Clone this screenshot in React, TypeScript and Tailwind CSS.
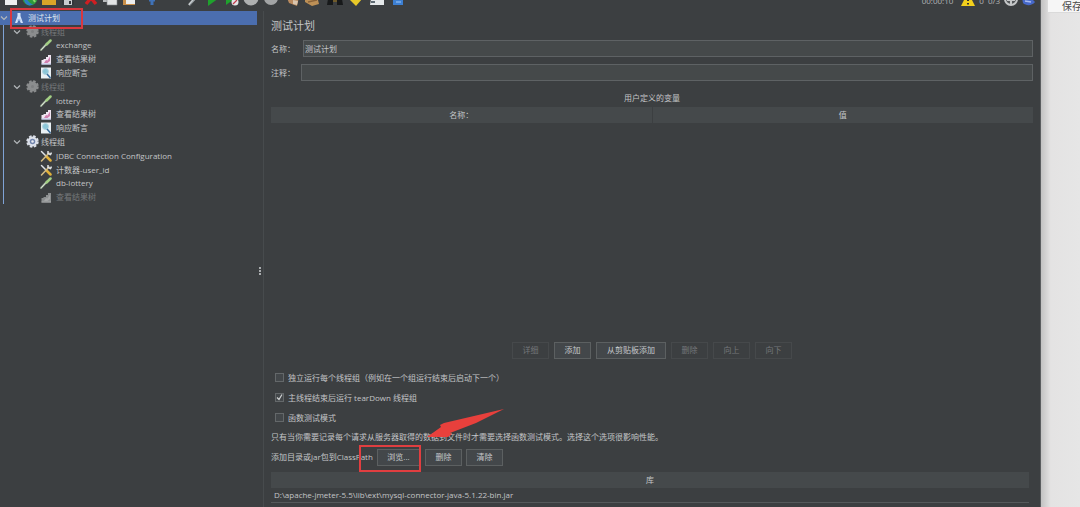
import React from "react";

type IconName =
  | "gear"
  | "gearOff"
  | "dropper"
  | "chart"
  | "chartOff"
  | "assert"
  | "tools"
  | "flask";

function TreeIcon({ name }: { name: IconName }) {
  if (name === "flask")
    return (
      <svg className="h-3 w-3 shrink-0" viewBox="0 0 12 12" aria-hidden="true">
        <path d="M4.500 1h3v3l2.500 7H7.800L6 7 4.200 11H2l2.500-7z" fill="#d3e2f8" />
        <path d="M4.300 8h3.400" stroke="#8fb2e6" strokeWidth="1" />
      </svg>
    );
  if (name === "gear" || name === "gearOff") {
    const on = name === "gear";
    return (
      <svg className="h-[13px] w-[13px] shrink-0" viewBox="0 0 26 26" aria-hidden="true">
        <circle cx="13" cy="13" r="10.800" fill="none" stroke={on ? "#dde1ea" : "#8b8d8e"} strokeWidth="3.400" strokeDasharray="5.200 3.280" />
        <circle cx="13" cy="13" r="10" fill={on ? "#dde1ea" : "#8b8d8e"} />
        {on && <circle cx="13" cy="13" r="5.500" fill="#7185ad" />}
        <circle cx="13" cy="13" r={on ? 2.5 : 3} fill={on ? "#eceef4" : "#7d7f80"} />
      </svg>
    );
  }
  if (name === "dropper")
    return (
      <svg className="h-3 w-3 shrink-0" viewBox="0 0 24 24" aria-hidden="true">
        <path d="M2 22 14 9" stroke="#8fa08b" strokeWidth="4" strokeLinecap="round" />
        <path d="M3 21 13 10" stroke="#e5eee0" strokeWidth="2" strokeLinecap="round" />
        <path d="M13 11 21 3" stroke="#a3cf84" strokeWidth="5" strokeLinecap="round" />
      </svg>
    );
  if (name === "chart" || name === "chartOff") {
    const on = name === "chart";
    return (
      <svg className="h-3 w-3 shrink-0" viewBox="0 0 24 24" aria-hidden="true">
        <path d="M3 14h4v-2h5V8h4V4h6v19H3z" fill={on ? "#f0e6f2" : "#8c8f90"} />
        <path d="m8 20 4-6 3 1 5-8v9l-5 4z" fill={on ? "#cf7fae" : "#a4a6a7"} />
        <path d="M3 22h19" stroke={on ? "#b9c4ea" : "#a4a6a7"} strokeWidth="2" />
      </svg>
    );
  }
  if (name === "assert")
    return (
      <svg className="h-3 w-3 shrink-0" viewBox="0 0 24 24" aria-hidden="true">
        <path d="M2 1h20v22H2z" fill="#e9f0f4" />
        <circle cx="11" cy="9" r="6" fill="#8cc6d8" stroke="#b3d4e0" strokeWidth="2" />
        <path d="m14 14 7 8" stroke="#34699a" strokeWidth="3" />
      </svg>
    );
  return (
    <svg className="h-3 w-3 shrink-0" viewBox="0 0 24 24" aria-hidden="true">
      <path d="m3 3 11 11" stroke="#dfe3e6" strokeWidth="3" strokeLinecap="round" />
      <path d="m13 13 8 8" stroke="#e0b03a" strokeWidth="5" strokeLinecap="round" />
      <path d="M3 22 18 6" stroke="#d5bd82" strokeWidth="3" strokeLinecap="round" />
      <path d="M16 2v5l5 2 2-4" fill="none" stroke="#dfe3e6" strokeWidth="3" />
    </svg>
  );
}

type Node = { text: string; icon: IconName; level: 1 | 2; off?: boolean };

const nodes: Node[] = [
  { text: "线程组", icon: "gearOff", level: 1, off: true },
  { text: "exchange", icon: "dropper", level: 2 },
  { text: "查看结果树", icon: "chart", level: 2 },
  { text: "响应断言", icon: "assert", level: 2 },
  { text: "线程组", icon: "gearOff", level: 1, off: true },
  { text: "lottery", icon: "dropper", level: 2 },
  { text: "查看结果树", icon: "chart", level: 2 },
  { text: "响应断言", icon: "assert", level: 2 },
  { text: "线程组", icon: "gear", level: 1 },
  { text: "JDBC Connection Configuration", icon: "tools", level: 2 },
  { text: "计数器-user_id", icon: "tools", level: 2 },
  { text: "db-lottery", icon: "dropper", level: 2 },
  { text: "查看结果树", icon: "chartOff", level: 2, off: true },
];

function Chevron() {
  return (
    <svg className="h-2 w-2 shrink-0" viewBox="0 0 8 8" aria-hidden="true">
      <path d="m1 2.500 3 3 3-3" fill="none" stroke="#b4b8bb" strokeWidth="1.200" />
    </svg>
  );
}

function Tree() {
  return (
    <nav className="w-[257px] shrink-0" aria-label="测试计划">
      <ul className="relative grid h-[193px] auto-rows-fr">
        <li className="relative flex items-center bg-[#4b6eaf] text-[#dfe5ee]">
          <Chevron />
          <span className="ml-[5px] flex items-center gap-[3px]">
            <TreeIcon name="flask" />
            测试计划
          </span>
          <span className="pointer-events-none absolute -top-[3px] left-[10px] z-10 h-[21px] w-[73px] border-2 border-[#d9383f]" />
        </li>
        {nodes.map((n, i) => (
          <li
            key={i}
            className={`flex items-center ${n.level === 1 ? "pl-[13px]" : "pl-[40px]"} ${n.off ? "text-[#75787a]" : "text-[#c3c5c7]"}`}
          >
            {n.level === 1 && (
              <span className="mr-[5px] flex">
                <Chevron />
              </span>
            )}
            <span className={`flex items-center ${n.level === 1 ? "gap-[2px]" : "gap-1"}`}>
              <TreeIcon name={n.icon} />
              {n.text}
            </span>
          </li>
        ))}
        <span className="pointer-events-none absolute top-[14px] bottom-0 left-[3px] w-px bg-[#7fa3d6]" />
      </ul>
    </nav>
  );
}

/* Toolbar drawings share a 16x16 box. */
const tools: { label: string; art: React.ReactNode }[][] = [
  [
    { label: "新建", art: <path d="M2 0h12v15H2z" fill="#eeefef" /> },
    {
      label: "模板",
      art: (
        <>
          <circle cx="8" cy="8" r="7.500" fill="#2f9a3c" />
          <path d="M2 10c4-3 4 4 9 4-3 3-8 1-9-4z" fill="#2b7fc4" />
          <path d="M9 8c2 0 3 2 4 4" stroke="#8fd66a" strokeWidth="2" fill="none" />
        </>
      ),
    },
    { label: "打开", art: <path d="M1 4h14v11H1z" fill="#dba428" /> },
    {
      label: "保存",
      art: (
        <>
          <path d="M2 1h12v14H2z" fill="#33373b" />
          <path d="M4 10h8v5H4z" fill="#c9cccf" />
          <path d="M9 11h2v3H9z" fill="#33373b" />
        </>
      ),
    },
  ],
  [
    { label: "剪切", art: <path d="M3 2 13 14M13 2 3 14" stroke="#cf1f22" strokeWidth="3.400" /> },
    {
      label: "复制",
      art: (
        <>
          <path d="M1 1h9v11H1z" fill="#b9bcbe" />
          <path d="M5 4h10v11H5z" fill="#e2e4e5" stroke="#84888a" strokeWidth=".6" />
        </>
      ),
    },
    {
      label: "粘贴",
      art: (
        <>
          <path d="M2 1h12v14H2z" fill="#c98f49" />
          <path d="M5 5h7l2 2v7H5z" fill="#eceded" />
        </>
      ),
    },
  ],
  [
    { label: "展开", art: <path d="M8 5v10M5 10h6" stroke="#3f72b8" strokeWidth="3" /> },
    { label: "折叠", art: <path d="M4 8h8" stroke="#3f72b8" strokeWidth="2" /> },
    {
      label: "切换",
      art: (
        <>
          <path d="M7 15 16 5" stroke="#c7cccf" strokeWidth="2.500" />
          <path d="M8 15 16 6" stroke="#777d80" strokeWidth="1" />
        </>
      ),
    },
  ],
  [
    { label: "启动", art: <path d="M3 0v16l11-8z" fill="#1fa12d" /> },
    {
      label: "不停顿开始",
      art: (
        <>
          <path d="M2 0v15l11-8z" fill="#1fa12d" />
          <circle cx="11" cy="12" r="3.500" fill="#e3e5e6" />
          <path d="m9 14 4-4" stroke="#c13a4a" strokeWidth="1.200" />
        </>
      ),
    },
    { label: "停止", art: <circle cx="8" cy="8" r="7.500" fill="#aeb0b1" /> },
    { label: "关闭", art: <circle cx="9" cy="8" r="7" fill="#a2a4a5" /> },
  ],
  [
    {
      label: "清除",
      art: (
        <>
          <path d="m2 8 6-4 6 3-2 9-8-3z" fill="#b98a5e" />
          <path d="m8 10 5 1-1 4-4-1z" fill="#d9c5ae" />
        </>
      ),
    },
    {
      label: "清除全部",
      art: (
        <>
          <path d="M1 6h12l2 8-7 2-7-4z" fill="#bd9056" />
          <path d="m4 12 9-2" stroke="#8a6238" strokeWidth="1.400" />
        </>
      ),
    },
  ],
  [
    {
      label: "查找",
      art: (
        <>
          <path d="M1 9h5v6H0zM10 9h5l1 6h-6z" fill="#17191a" />
          <path d="M6 10h4v2H6z" fill="#6e5a2b" />
        </>
      ),
    },
    { label: "重置查找", art: <path d="m3 9 8-6 5 6-6 7z" fill="#e8c928" /> },
  ],
  [
    {
      label: "函数助手",
      art: (
        <>
          <path d="M3 3h12v12H1z" fill="#e5e8ea" />
          <path d="M2 12h4" stroke="#5f6b74" strokeWidth="2" />
        </>
      ),
    },
  ],
  [
    {
      label: "帮助",
      art: (
        <>
          <path d="M1 1h10v14H1z" fill="#3c7fd2" />
          <path d="M4 12h5" stroke="#7fb0ec" strokeWidth="1.500" />
        </>
      ),
    },
  ],
];

function Toolbar() {
  return (
    <header className="flex h-[11px] shrink-0 items-end justify-between overflow-hidden pb-[5px]">
      <div className="flex gap-1 pl-px">
        {tools.map((group, i) => (
          <div key={i} className="flex">
            {group.map((t) => (
              <button key={t.label} type="button" aria-label={t.label} className="flex w-[19px] justify-center">
                <svg className="h-4 w-4" viewBox="0 0 16 16" aria-hidden="true">
                  {t.art}
                </svg>
              </button>
            ))}
          </div>
        ))}
      </div>
      <div className="flex items-end pr-1 leading-[10px] text-[#b4b6b8]">
        <span>00:00:10</span>
        <svg className="ml-2 h-[14px] w-[14px]" viewBox="0 0 14 14" aria-hidden="true">
          <path d="M7 0 14 14H0z" fill="#f2cf1c" />
          <path d="M7 4v5M7 11v1.500" stroke="#34322a" strokeWidth="2" />
        </svg>
        <span className="ml-1">0</span>
        <span className="ml-1">0/3</span>
        <svg className="ml-1 h-[14px] w-[14px]" viewBox="0 0 14 14" aria-hidden="true">
          <circle cx="7" cy="7" r="6" fill="#55585a" stroke="#c5c7c8" strokeWidth="2" />
          <path d="M7 7v6M3 8h8" stroke="#c5c7c8" strokeWidth="2" />
        </svg>
        <svg className="ml-1 h-[14px] w-[14px]" viewBox="0 0 14 14" aria-hidden="true">
          <path d="M0 6h9l4 4c-3 4-9 4-12 1z" fill="#4668c8" />
          <path d="m3 9 6 1" stroke="#a9bbf0" strokeWidth="1.500" />
        </svg>
      </div>
    </header>
  );
}

function Btn({ children, wide, disabled }: { children: React.ReactNode; wide?: boolean; disabled?: boolean }) {
  return (
    <button
      type="button"
      disabled={disabled}
      className={`h-[17px] border text-center ${wide ? "px-[10px]" : "min-w-[37px] px-2"} ${
        disabled ? "border-[#46494b] text-[#74777a]" : "border-[#5c6061] bg-[#43474a] text-[#c6c8ca]"
      }`}
    >
      {children}
    </button>
  );
}

function Check({ label, checked }: { label: string; checked?: boolean }) {
  return (
    <label className="flex h-5 items-center gap-1 pl-1">
      <span className="grid h-[9px] w-[9px]">
        <input
          type="checkbox"
          defaultChecked={checked}
          className="peer col-start-1 row-start-1 h-[9px] w-[9px] appearance-none border border-[#64686a] bg-[#43474a]"
        />
        <svg
          className="pointer-events-none invisible col-start-1 row-start-1 h-[9px] w-[9px] peer-checked:visible"
          viewBox="0 0 9 9"
          aria-hidden="true"
        >
          <path d="m2 4.500 2 2 3-5" fill="none" stroke="#d0d2d3" strokeWidth="1.200" />
        </svg>
      </span>
      {label}
    </label>
  );
}

function PlanForm() {
  return (
    <main className="flex min-w-0 flex-1 flex-col border-l border-[#474b4d] pt-[7px] pr-[7px] pb-[4px] pl-[7px]">
      <h1 className="h-4 text-[11px] leading-4">测试计划</h1>
      <div className="mt-[6px] flex items-center gap-2">
        <label htmlFor="plan-name" className="w-6">名称：</label>
        <input
          id="plan-name"
          defaultValue="测试计划"
          className="h-[17px] min-w-0 flex-1 border border-[#5e6264] bg-[#45494a] px-px text-[#c3c5c7] outline-none"
        />
      </div>
      <div className="mt-[7px] flex items-center gap-[6px]">
        <label htmlFor="plan-note" className="w-6">注释：</label>
        <input
          id="plan-note"
          className="h-[17px] min-w-0 flex-1 border border-[#5e6264] bg-[#45494a] px-px outline-none"
        />
      </div>
      <div className="mt-2 flex-1">
        <table className="w-full table-fixed">
          <caption className="h-[18px] leading-[18px]">用户定义的变量</caption>
          <thead>
            <tr className="h-4 bg-[#45494b]">
              <th className="border-r border-[#3c3f41] font-normal">名称：</th>
              <th className="font-normal">值</th>
            </tr>
          </thead>
          <tbody />
        </table>
      </div>
      <div className="flex justify-center gap-[5px]">
        <Btn disabled>详细</Btn>
        <Btn>添加</Btn>
        <Btn wide>从剪贴板添加</Btn>
        <Btn disabled>删除</Btn>
        <Btn disabled>向上</Btn>
        <Btn disabled>向下</Btn>
      </div>
      <div className="mt-[9px]">
        <Check label="独立运行每个线程组（例如在一个组运行结束后启动下一个）" />
        <Check label="主线程结束后运行 tearDown 线程组" checked />
        <Check label="函数测试模式" />
      </div>
      <p className="h-[18px] leading-[18px]">
        只有当你需要记录每个请求从服务器取得的数据到文件时才需要选择函数测试模式。选择这个选项很影响性能。
      </p>
      <div className="mt-[3px] flex items-center gap-1">
        <span className="w-[102px] whitespace-nowrap">添加目录或jar包到ClassPath</span>
        <span className="relative mr-px flex">
          <button type="button" className="h-[17px] w-[43px] border border-[#5c6061] bg-[#43474a] text-[#c6c8ca]">
            浏览...
          </button>
          <span className="pointer-events-none absolute -top-1 -left-[18px] h-[27px] w-[62px] border-2 border-[#e03e40]" />
          <svg
            className="pointer-events-none absolute -top-[41px] left-[49px] h-[34px] w-[80px]"
            viewBox="0 0 80 34"
            aria-hidden="true"
          >
            <path d="M78 1 18 15 14 17 15 19 1 29 22 29 26 26 24 25 50 15z" fill="#e8403c" />
          </svg>
        </span>
        <Btn>删除</Btn>
        <Btn>清除</Btn>
      </div>
      <table className="mt-[6px] mr-1 table-fixed">
        <thead>
          <tr className="h-4 bg-[#45494b]">
            <th className="font-normal">库</th>
          </tr>
        </thead>
        <tbody>
          <tr className="h-[15px] border-b border-[#55595b]">
            <td className="pl-[3px]">D:\apache-jmeter-5.5\lib\ext\mysql-connector-java-5.1.22-bin.jar</td>
          </tr>
        </tbody>
      </table>
    </main>
  );
}

export default function App() {
  return (
    <div className="flex h-screen overflow-hidden bg-[#e6e6e6] font-['Open_Sans','Noto_Sans_CJK_SC',sans-serif] text-[8px] leading-[12px] text-[#c3c5c7]">
      <div className="flex min-w-0 flex-1 flex-col border-r border-[#5a5d5f] bg-[#3c3f41]">
        <Toolbar />
        <div className="flex min-h-0 flex-1">
          <Tree />
          <div className="flex w-[6px] shrink-0 flex-col items-center justify-center gap-px pt-6">
            <i className="h-[2px] w-[2px] bg-[#a9acae]" />
            <i className="h-[2px] w-[2px] bg-[#a9acae]" />
            <i className="h-[2px] w-[2px] bg-[#a9acae]" />
          </div>
          <PlanForm />
        </div>
      </div>
      <aside className="w-[39px] shrink-0 overflow-hidden bg-linear-to-r from-[#c2c2c2] via-[#e4e3e3] via-25% to-[#e6e6e6]">
        <div className="ml-[6px] h-[13px] border-b border-l border-[#dadada] bg-[#f6f6f6] pl-[14px] text-[10px] leading-[12px] whitespace-nowrap text-[#4a4a4a]">
          保存
        </div>
      </aside>
    </div>
  );
}
